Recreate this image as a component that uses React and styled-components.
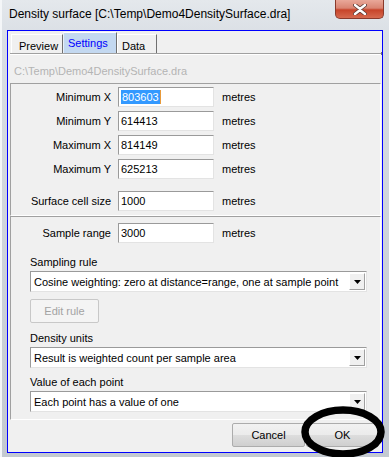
import React from 'react';
import styled, { createGlobalStyle, css } from 'styled-components';

const GlobalStyle = createGlobalStyle`
  body {
    margin: 0;
    font-family: "Liberation Sans", Arial, sans-serif;
    background: #cfd5dc;
  }
`;

const Window = styled.div`
  position: relative;
  width: 389px;
  height: 457px;
  display: flex;
  flex-direction: column;
  overflow: hidden;
  background: linear-gradient(180deg, #e4e8ec 0, #d9dee4 40px, #c3c9d0 100%);
  box-shadow: inset 2px 0 0 #f4f6f8;
`;

const TitleBar = styled.div`
  height: 30px;
  display: flex;
  align-items: flex-start;
  padding-left: 9px;
`;

const Title = styled.div`
  font-size: 12px;
  line-height: 14px;
  padding-top: 7px;
  color: #000;
`;

const CloseButton = styled.div`
  margin-left: auto;
  margin-right: 5px;
  width: 47px;
  height: 18px;
  border: 1px solid #8a3a2c;
  border-top: none;
  border-radius: 0 0 5px 5px;
  background: linear-gradient(180deg, #e9a899 0, #d98472 45%, #c7442a 55%, #d66a4f 100%);
  display: flex;
  align-items: center;
  justify-content: center;
`;

const Client = styled.div`
  flex: 1;
  margin: 0 6px 4px 7px;
  border: 1px solid #0000ff;
  background: #f0f0f0;
  display: flex;
  flex-direction: column;
`;

const TabStrip = styled.div`
  display: flex;
  align-items: flex-end;
  height: 22px;
  margin: 0 1px 0 2px;
  padding-left: 1px;
  border-bottom: 1px solid #a0a0a0;
  box-shadow: 0 1px 0 #ffffff;
  position: relative;
  &::after {
    content: "";
    position: absolute;
    right: -1px;
    bottom: -2px;
    width: 1px;
    height: 3px;
    background: #707070;
  }
`;

const Tab = styled.div`
  width: ${p => p.w}px;
  height: 19px;
  padding-left: ${p => p.pad}px;
  font-size: 11px;
  line-height: 22px;
  color: #000;
  border-left: 1px solid #ffffff;
  border-top: 1px solid #ffffff;
  border-right: 1px solid #707070;
  box-sizing: border-box;
  ${p => p.active && css`
    height: 21px;
    line-height: 20px;
    color: #0000ff;
    background: #c3d8f0;
    border-left-color: #e8f0fa;
  `}
`;

const PathLabel = styled.div`
  height: 29px;
  padding: 11px 0 0 6px;
  box-sizing: border-box;
  font-size: 11px;
  color: #b4b4b4;
`;

const Panel = styled.div`
  margin: 0 1px 0 2px;
  border-top: 1px solid #a0a0a0;
  border-left: 1px solid #a0a0a0;
  border-right: 1px solid #ffffff;
  border-bottom: 1px solid #ffffff;
  padding: ${p => p.pad};
  display: flex;
  flex-direction: column;
  gap: 4px;
`;

const FieldRow = styled.div`
  display: grid;
  grid-template-columns: 100px 96px auto;
  column-gap: 7px;
  align-items: center;
  margin-top: ${p => p.gapTop || 0}px;
  margin-left: ${p => p.indent || 0}px;
  font-size: 11px;
`;

const FieldLabel = styled.div`
  text-align: right;
  color: #000;
`;

const Unit = styled.div`
  padding-left: 1px;
  color: #000;
`;

const TextBox = styled.div`
  height: 20px;
  box-sizing: border-box;
  background: #ffffff;
  border: 1px solid;
  border-color: #9a9a9a #e3e3e3 #e3e3e3 #9a9a9a;
  padding: 2px 0 0 2px;
  font-size: 11px;
  line-height: 14px;
  color: #000;
`;

const Selected = styled.span`
  background: #3399ff;
  color: #ffffff;
  padding: 1px;
  box-shadow: 1px 0 0 #e89a3a;
`;

const SectionLabel = styled.div`
  font-size: 11px;
  line-height: 13px;
  color: #000;
  margin-top: ${p => p.gapTop || 0}px;
  margin-bottom: -2px;
`;

const Dropdown = styled.div`
  height: 21px;
  box-sizing: border-box;
  display: flex;
  align-items: center;
  background: #ffffff;
  border: 1px solid;
  border-color: #9a9a9a #e3e3e3 #e3e3e3 #9a9a9a;
  padding-left: 3px;
  font-size: 11px;
  color: #000;
`;

const DropText = styled.div`
  flex: 1;
`;

const DropArrow = styled.div`
  width: 16px;
  height: 17px;
  margin-right: 1px;
  box-sizing: border-box;
  background: #f0f0f0;
  border: 1px solid;
  border-color: #ffffff #a0a0a0 #a0a0a0 #ffffff;
  display: flex;
  align-items: center;
  justify-content: center;
`;

const PushButton = styled.div`
  width: ${p => p.w}px;
  height: 24px;
  box-sizing: border-box;
  display: flex;
  align-items: center;
  justify-content: center;
  font-size: 11px;
  color: ${p => (p.disabled ? '#a3a3a3' : '#000')};
  background: ${p => (p.disabled ? '#f4f4f4' : 'linear-gradient(180deg, #f2f2f2 0, #ebebeb 50%, #dddddd 51%, #cfcfcf 100%)')};
  border: 1px solid ${p => (p.disabled ? '#c8c8c8' : '#acacac')};
  border-radius: 2px;
  margin-top: ${p => p.gapTop || 0}px;
`;

const Footer = styled.div`
  flex: 1;
  display: flex;
  justify-content: flex-end;
  align-items: flex-start;
  gap: 1px;
  padding: 3px 3px 0 0;
`;

const Annotation = styled.svg`
  position: absolute;
  left: 299px;
  top: 405px;
  pointer-events: none;
`;

const Arrow = () => (
  <svg width="7" height="4" viewBox="0 0 7 4">
    <path d="M0 0h7L3.5 4z" fill="#000" />
  </svg>
);

const Select = ({ children }) => (
  <Dropdown>
    <DropText>{children}</DropText>
    <DropArrow><Arrow /></DropArrow>
  </Dropdown>
);

const extents = [
  ['Minimum X', '803603', true],
  ['Minimum Y', '614413'],
  ['Maximum X', '814149'],
  ['Maximum Y', '625213'],
];

export default function App() {
  return (
    <>
      <GlobalStyle />
      <Window>
        <TitleBar>
          <Title>Density surface [C:\Temp\Demo4DensitySurface.dra]</Title>
          <CloseButton>
            <svg width="14" height="11" viewBox="0 0 14 11">
              <path d="M2 1l5 4 5-4M2 10l5-4 5 4" stroke="#5a3a35" strokeWidth="4" fill="none" strokeLinecap="round" />
              <path d="M2 1l5 4 5-4M2 10l5-4 5 4" stroke="#ffffff" strokeWidth="2.4" fill="none" strokeLinecap="round" />
            </svg>
          </CloseButton>
        </TitleBar>
        <Client>
          <TabStrip>
            <Tab w={52} pad={7}>Preview</Tab>
            <Tab w={54} pad={4} active>Settings</Tab>
            <Tab w={40} pad={4}>Data</Tab>
          </TabStrip>
          <PathLabel>C:\Temp\Demo4DensitySurface.dra</PathLabel>
          <Panel pad="3px 0 4px 0">
            {extents.map(([label, value, sel]) => (
              <FieldRow key={label}>
                <FieldLabel>{label}</FieldLabel>
                <TextBox>{sel ? <Selected>{value}</Selected> : value}</TextBox>
                <Unit>metres</Unit>
              </FieldRow>
            ))}
            <FieldRow gapTop={8}>
              <FieldLabel>Surface cell size</FieldLabel>
              <TextBox>1000</TextBox>
              <Unit>metres</Unit>
            </FieldRow>
          </Panel>
          <Panel pad="6px 13px 7px 19px">
            <FieldRow indent={-19}>
              <FieldLabel>Sample range</FieldLabel>
              <TextBox>3000</TextBox>
              <Unit>metres</Unit>
            </FieldRow>
            <SectionLabel gapTop={9}>Sampling rule</SectionLabel>
            <Select>Cosine weighting: zero at distance=range, one at sample point</Select>
            <PushButton w={69} disabled gapTop={3}>Edit rule</PushButton>
            <SectionLabel gapTop={5}>Density units</SectionLabel>
            <Select>Result is weighted count per sample area</Select>
            <SectionLabel gapTop={4}>Value of each point</SectionLabel>
            <Select>Each point has a value of one</Select>
          </Panel>
          <Footer>
            <PushButton w={73}>Cancel</PushButton>
            <PushButton w={73}>OK</PushButton>
          </Footer>
        </Client>
        <Annotation width="90" height="52" viewBox="0 0 90 52">
          <ellipse cx="44" cy="27" rx="38" ry="22" fill="none" stroke="#000" strokeWidth="7.5" />
        </Annotation>
      </Window>
    </>
  );
}
